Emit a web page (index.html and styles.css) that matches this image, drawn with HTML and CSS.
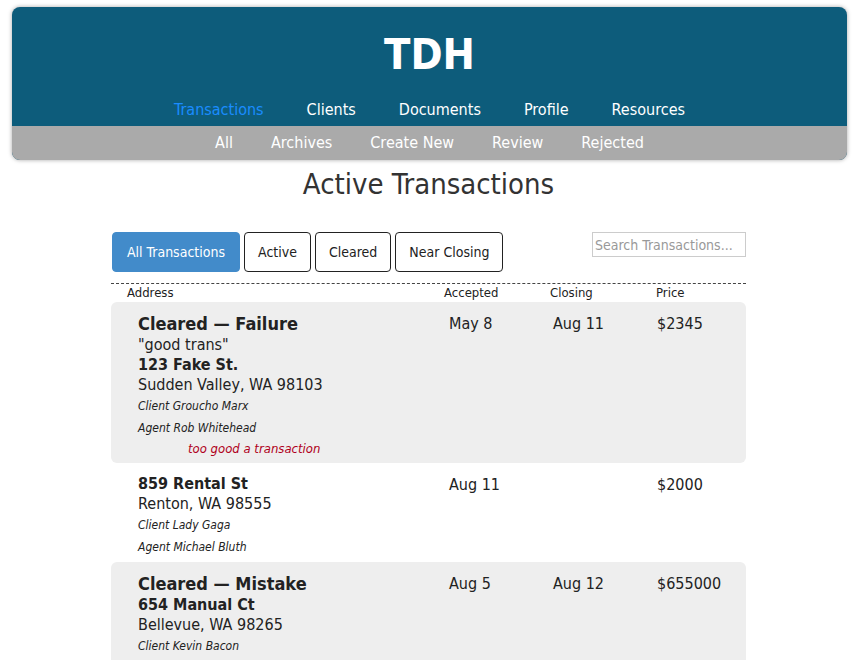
FILE: index.html
```html
<!DOCTYPE html>
<html>
<head>
<meta charset="utf-8">
<title>TDH</title>
<link rel="stylesheet" href="styles.css">
</head>
<body>
<header class="masthead">
  <div class="brand">TDH</div>
  <nav class="main-nav">
    <a class="nav-link active">Transactions</a>
    <a class="nav-link">Clients</a>
    <a class="nav-link">Documents</a>
    <a class="nav-link">Profile</a>
    <a class="nav-link">Resources</a>
  </nav>
  <nav class="sub-nav">
    <a class="sub-link">All</a>
    <a class="sub-link">Archives</a>
    <a class="sub-link">Create New</a>
    <a class="sub-link">Review</a>
    <a class="sub-link">Rejected</a>
  </nav>
</header>

<main class="content">
  <h1 class="page-title">Active Transactions</h1>

  <div class="toolbar">
    <div class="filters">
      <button class="filter selected">All Transactions</button>
      <button class="filter">Active</button>
      <button class="filter">Cleared</button>
      <button class="filter">Near Closing</button>
    </div>
    <input class="search" type="text" placeholder="Search Transactions...">
  </div>

  <div class="list-head">
    <span>Address</span>
    <span>Accepted</span>
    <span>Closing</span>
    <span>Price</span>
  </div>

  <div class="row shaded">
    <div class="addr">
      <div class="status">Cleared — Failure</div>
      <div class="line">"good trans"</div>
      <div class="line street">123 Fake St.</div>
      <div class="line">Sudden Valley, WA 98103</div>
      <div class="person">Client Groucho Marx</div>
      <div class="person">Agent Rob Whitehead</div>
      <div class="note">too good a transaction</div>
    </div>
    <div class="cell">May 8</div>
    <div class="cell">Aug 11</div>
    <div class="cell">$2345</div>
  </div>

  <div class="row">
    <div class="addr">
      <div class="line street">859 Rental St</div>
      <div class="line">Renton, WA 98555</div>
      <div class="person">Client Lady Gaga</div>
      <div class="person">Agent Michael Bluth</div>
    </div>
    <div class="cell">Aug 11</div>
    <div class="cell"></div>
    <div class="cell">$2000</div>
  </div>

  <div class="row shaded last">
    <div class="addr">
      <div class="status">Cleared — Mistake</div>
      <div class="line street">654 Manual Ct</div>
      <div class="line">Bellevue, WA 98265</div>
      <div class="person">Client Kevin Bacon</div>
    </div>
    <div class="cell">Aug 5</div>
    <div class="cell">Aug 12</div>
    <div class="cell">$655000</div>
  </div>
</main>
</body>
</html>
```

FILE: styles.css
```css
html, body {
  margin: 0;
  padding: 0;
  background: #ffffff;
}

body {
  font-family: "DejaVu Sans Condensed", "DejaVu Sans", sans-serif;
  font-stretch: condensed;
  color: #222222;
  height: 660px;
  overflow: hidden;
}

.masthead {
  margin: 7px 12px 0;
  border-radius: 8px;
  overflow: hidden;
  background: #0d5c7b;
  box-shadow: 0 0 4px rgba(0, 0, 0, 0.35);
}

.brand {
  padding-top: 21px;
  font-size: 43px;
  line-height: 52px;
  font-weight: bold;
  color: #ffffff;
  text-align: center;
}

.main-nav {
  display: flex;
  justify-content: center;
  gap: 43px;
  padding: 20px 0 6px;
  font-size: 16px;
  line-height: 20px;
}

.nav-link {
  color: #ffffff;
}

.nav-link.active {
  color: #1a8cff;
}

.sub-nav {
  display: flex;
  justify-content: center;
  gap: 38px;
  padding: 7px 0;
  background: #aaaaaa;
  font-size: 16px;
  line-height: 20px;
}

.sub-link {
  color: #ffffff;
}

.content {
  width: 635px;
  margin: 0 auto;
  padding-right: 2px;
}

.page-title {
  margin: 4px 0 0;
  font-size: 29px;
  line-height: 40px;
  font-weight: normal;
  color: #333333;
  text-align: center;
}

.toolbar {
  display: flex;
  justify-content: space-between;
  align-items: flex-start;
  margin-top: 28px;
}

.filters {
  display: flex;
  gap: 4px;
  margin-left: 1px;
}

.filter {
  height: 40px;
  padding: 0 13px;
  border: 1px solid #222222;
  border-radius: 4px;
  background: #ffffff;
  color: #222222;
  font-family: inherit;
  font-stretch: condensed;
  font-size: 14px;
}

.filter.selected {
  padding: 0 14px;
  background: #428bca;
  border-color: #428bca;
  color: #ffffff;
}

.search {
  width: 154px;
  height: 25px;
  box-sizing: border-box;
  padding: 0 2px;
  border: 1px solid #cccccc;
  font-family: inherit;
  font-stretch: condensed;
  font-size: 14px;
  color: #222222;
}

.search::placeholder {
  color: #999999;
}

.list-head {
  display: grid;
  grid-template-columns: 317px 106px 106px 1fr;
  margin-top: 11px;
  padding-left: 16px;
  border-top: 1px dashed #444444;
  font-size: 13px;
  line-height: 17px;
  color: #222222;
  padding-bottom: 1px;
}

.row {
  display: grid;
  grid-template-columns: 311px 104px 104px 1fr;
  padding: 11px 0 4px 27px;
  border-radius: 6px;
  font-size: 16px;
  line-height: 20px;
}

.row.shaded {
  background: #eeeeee;
}

.row.last {
  padding-bottom: 30px;
}

.status {
  font-weight: bold;
  font-size: 18px;
  line-height: 22px;
}

.street {
  font-weight: bold;
}

.person {
  font-style: italic;
  font-size: 12px;
  line-height: 22px;
}

.note {
  font-style: italic;
  font-size: 13px;
  line-height: 19px;
  margin-bottom: 1px;
  color: #b00020;
  padding-left: 50px;
}

.cell {
  line-height: 22px;
}
```
